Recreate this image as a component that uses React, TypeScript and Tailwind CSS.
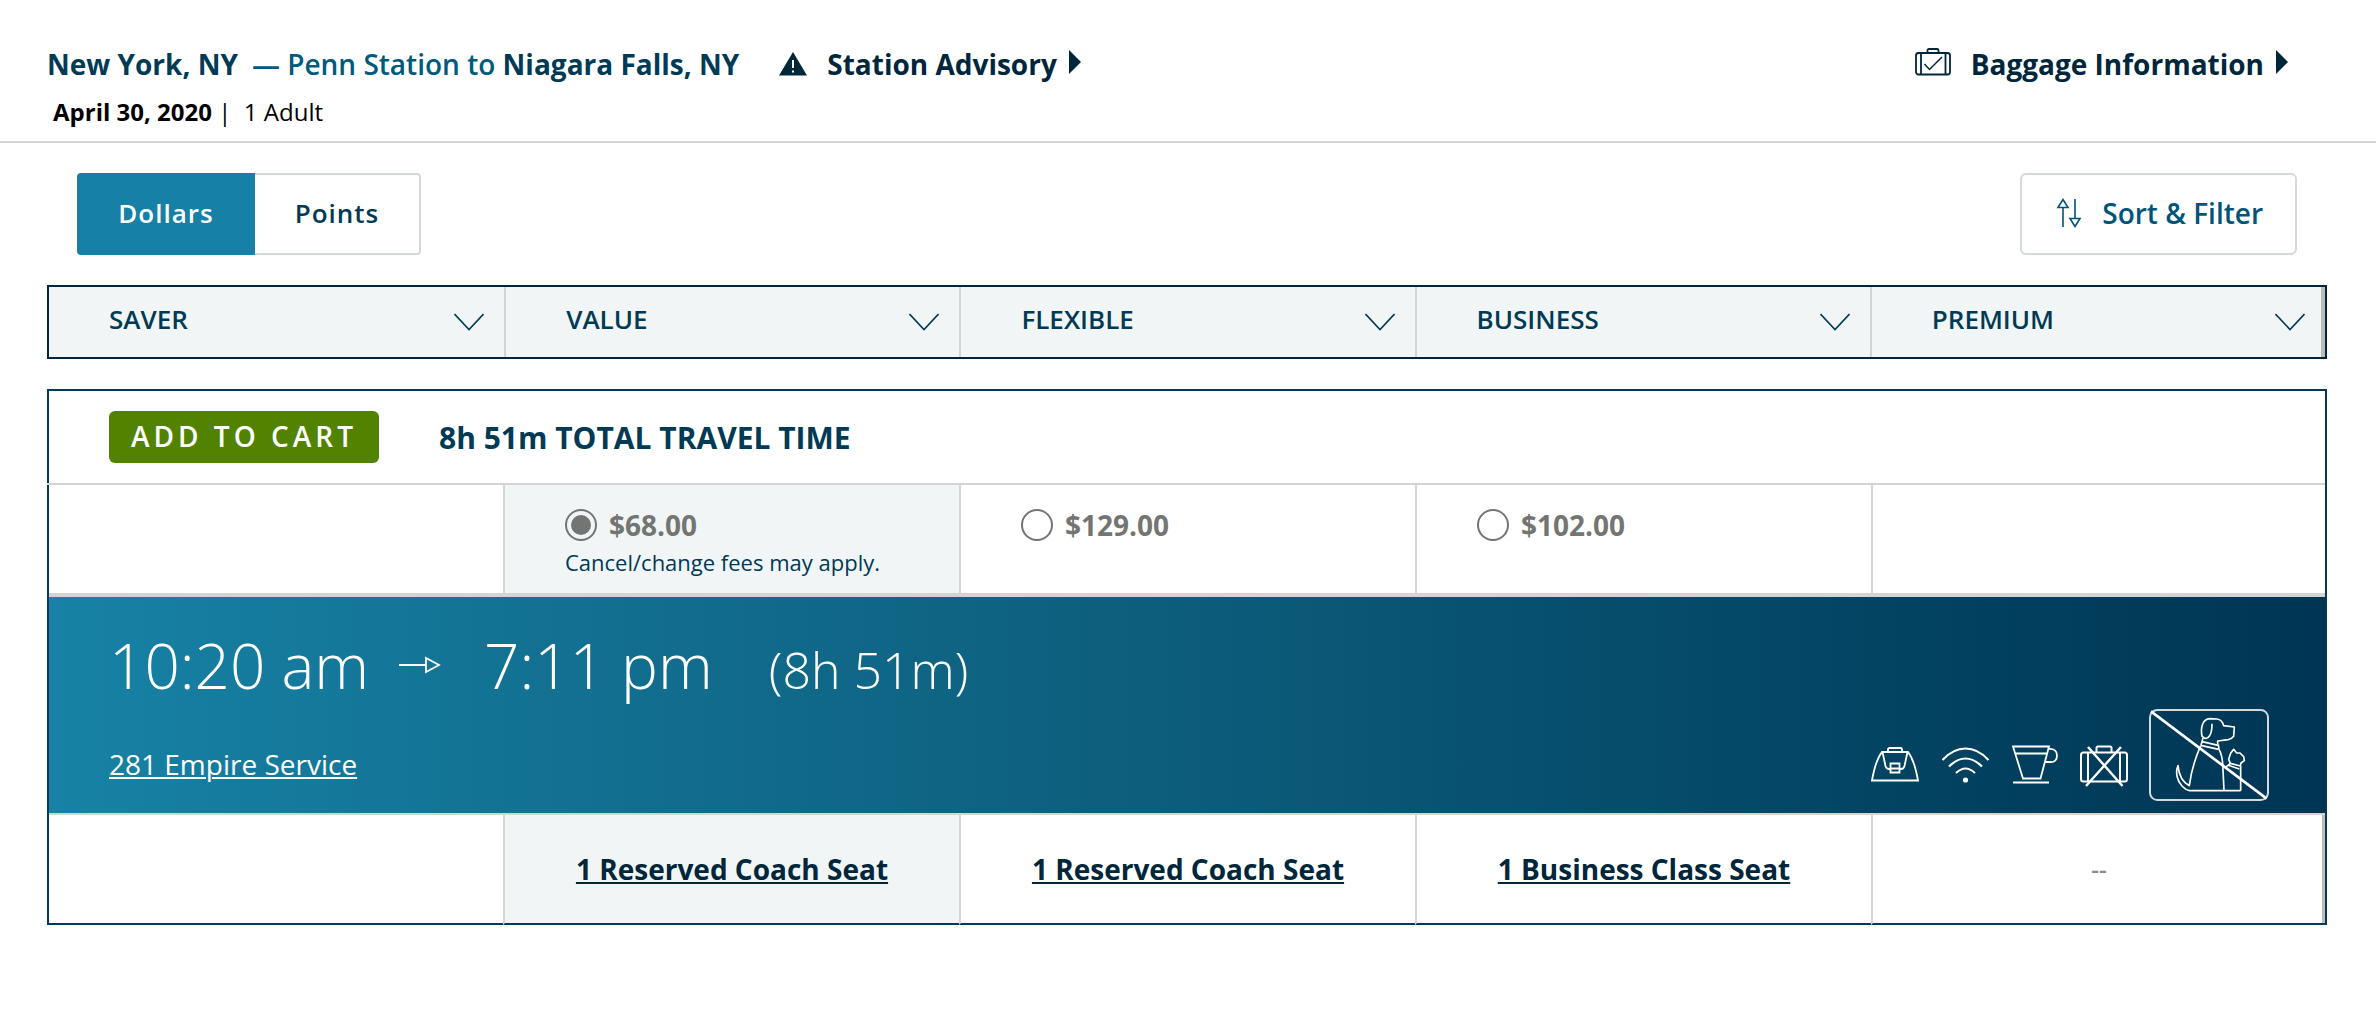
import { useState } from 'react'

const FARES = [
  { id: 'saver', label: 'SAVER', price: null, seat: '' },
  { id: 'value', label: 'VALUE', price: '$68.00', note: 'Cancel/change fees may apply.', seat: '1 Reserved Coach Seat' },
  { id: 'flexible', label: 'FLEXIBLE', price: '$129.00', seat: '1 Reserved Coach Seat' },
  { id: 'business', label: 'BUSINESS', price: '$102.00', seat: '1 Business Class Seat' },
  { id: 'premium', label: 'PREMIUM', price: null, seat: '--' },
]

export default function App() {
  const [currency, setCurrency] = useState('Dollars')
  const [fare, setFare] = useState('value')

  return (
    <div className="min-h-screen bg-white font-['Open_Sans',sans-serif] text-[#003a55]">
      {/* Trip summary */}
      <header className="border-b-2 border-[#d4d4d4] pt-11 pb-[13px] pl-[47px] pr-[88px]">
        <div className="flex items-center justify-between text-[28px] leading-10">
          <div className="flex items-center">
            <h1 className="font-bold">
              New York, NY
              <span className="ml-3.5 font-semibold text-[#005a7c]">— Penn Station to </span>
              Niagara Falls, NY
            </h1>
            <a href="#advisory" className="ml-10 flex items-center font-bold text-[#00263b]">
              <WarningIcon />
              <span className="ml-5">Station Advisory</span>
              <CaretIcon />
            </a>
          </div>
          <a href="#baggage" className="flex items-center font-bold text-[#00263b]">
            <BaggageCheckIcon />
            <span className="ml-5">Baggage Information</span>
            <CaretIcon />
          </a>
        </div>
        <p className="mt-3 ml-1.5 whitespace-pre text-[24px] leading-8 text-black">
          <span className="font-bold">April 30, 2020</span>
          <span> |  1 Adult</span>
        </p>
      </header>

      <main className="pl-[47px] pr-[49px]">
        {/* Currency switch and sort */}
        <div className="mt-[30px] flex justify-between pl-[30px] pr-[30px]">
          <div className="flex h-[82px]">
            {['Dollars', 'Points'].map(c => (
              <button
                key={c}
                onClick={() => setCurrency(c)}
                aria-pressed={currency === c}
                className={`pb-0.5 text-[26px] font-semibold tracking-[1px] first:w-[178px] first:rounded-l last:w-[166px] last:rounded-r ${
                  currency === c
                    ? 'bg-[#1780a7] text-white'
                    : 'border-2 border-[#d4d9d9] bg-white first:border-r-0 last:border-l-0'
                }`}
              >
                {c}
              </button>
            ))}
          </div>
          <button className="flex h-[82px] items-center gap-5 rounded-md border-2 border-[#d4d9d9] pr-8 pl-[34px] pb-0.5 text-[28px] font-semibold text-[#005478]">
            <SortIcon />
            Sort &amp; Filter
          </button>
        </div>

        {/* Fare families */}
        <div className="mt-[30px] grid grid-cols-5 border-2 border-[#00263b] bg-[#f1f5f6]">
          {FARES.map(f => (
            <button
              key={f.id}
              className="flex h-[70px] items-center justify-between border-l-2 border-[#d0d5d6] pr-5 pl-[60px] text-[26px] font-semibold first:border-l-0 last:border-r-4 last:border-r-[#b9bcbc] last:pr-4"
            >
              <span className="pb-1.5">{f.label}</span>
              <ChevronIcon />
            </button>
          ))}
        </div>

        {/* Itinerary */}
        <section className="mt-[30px] border-x-2 border-t-2 border-[#003a55]">
          <div className="flex h-[92px] items-center gap-[60px] pl-[60px]">
            <button className="h-[52px] w-[270px] rounded-md bg-[#528300] pb-0.5 text-[28px] font-semibold tracking-[4px] text-white">
              ADD TO CART
            </button>
            <h2 className="text-[30px] font-bold">8h 51m TOTAL TRAVEL TIME</h2>
          </div>

          <div className="-ml-0.5 border-t-2 border-[#d4d4d4]">
            <div className="-mr-0.5 grid grid-cols-5">
              {FARES.map(f => (
                <div
                  key={f.id}
                  className={`h-[108px] border-l-2 border-l-[#d4d4d4] pt-6 pl-[60px] first:border-l-[#003a55] last:border-r-2 last:border-r-[#003a55] ${
                    fare === f.id ? 'bg-[#f1f5f6]' : ''
                  }`}
                >
                  {f.price && (
                    <label className="flex h-8 items-center gap-3 text-[28px] font-bold text-[#737573]">
                      <input
                        type="radio"
                        name="fare"
                        value={f.id}
                        checked={fare === f.id}
                        onChange={() => setFare(f.id)}
                        className="h-8 w-8 appearance-none rounded-full border-2 border-[#737573] bg-white bg-clip-content p-1 checked:bg-[#737573]"
                      />
                      {f.price}
                    </label>
                  )}
                  {f.note && <p className="mt-1.5 text-[22px] leading-[30px]">{f.note}</p>}
                </div>
              ))}
            </div>
          </div>

          <div className="flex h-[222px] justify-between border-t-4 border-b-2 border-[#d4d4d4] bg-linear-to-r from-[#1782a5] via-[#0d5c7b] to-[#003554] pr-14 pl-[60px] text-white">
            <div className="pt-[26px]">
              <div className="flex h-[84px] items-baseline text-[62px] leading-[84px] font-light">
                <span>10:20 am</span>
                <ArrowIcon />
                <span>7:11 pm</span>
                <span className="ml-14 text-[50px]">(8h 51m)</span>
              </div>
              <a href="#train-281" className="mt-[37px] inline-block text-[28px] leading-10 underline decoration-2 underline-offset-2">
                281 Empire Service
              </a>
            </div>
            <div className="flex items-end gap-[21px] pb-3">
              <HandbagIcon />
              <WifiIcon />
              <CupIcon />
              <NoBaggageIcon />
              <NoPetsIcon />
            </div>
          </div>

          <div className="-mx-0.5 grid grid-cols-5">
            {FARES.map(f => (
              <div
                key={f.id}
                className={`flex h-[110px] items-center justify-center border-b-2 border-l-2 border-b-[#003a55] border-l-[#d4d4d4] first:border-l-[#003a55] last:border-r-2 last:border-r-[#003a55] last:shadow-[inset_-3px_0_0_#bdbdbd] ${
                  fare === f.id ? 'bg-[#f1f5f6]' : ''
                }`}
              >
                {f.price ? (
                  <a href={`#${f.id}`} className="text-[28px] font-bold text-[#00263b] underline decoration-2 underline-offset-2">
                    {f.seat}
                  </a>
                ) : (
                  <span className="text-[24px] font-semibold text-[#8a8a8a]">{f.seat}</span>
                )}
              </div>
            ))}
          </div>
        </section>
      </main>
    </div>
  )
}

function WarningIcon() {
  return (
    <svg className="h-6 w-7" viewBox="0 0 28 24">
      <path d="M14 0L28 23.5H0Z" fill="#00263b" />
      <path d="M14 8v8M14 18.5v2" stroke="#fff" strokeWidth={2} />
    </svg>
  )
}

function CaretIcon() {
  return (
    <svg className="mb-1 ml-3 h-6 w-3" viewBox="0 0 12 24" fill="#00263b">
      <path d="M0 0L12 12L0 24Z" />
    </svg>
  )
}

function BaggageCheckIcon() {
  return (
    <svg className="mb-1 h-7 w-9" viewBox="0 0 36 28" fill="none" stroke="#00263b" strokeWidth={1.8}>
      <rect x="1" y="5" width="34" height="21.5" rx="2.5" />
      <path d="M6 5v21.5M30.5 5v21.5M12.5 5V2.5Q12.5 1 14 1h8q1.5 0 1.5 1.5V5" />
      <path d="M9.5 16l5 5.5L27 9" strokeWidth={1.5} />
    </svg>
  )
}

function SortIcon() {
  return (
    <svg className="h-[30px] w-[26px]" viewBox="0 0 26 30" fill="none" stroke="#005478" strokeWidth={1.6}>
      <path d="M7 9.5V29M2 9.5L7 1.5L12 9.5ZM19 1v19.5M14 20.5h10L19 28.5Z" />
    </svg>
  )
}

function ChevronIcon() {
  return (
    <svg className="h-[18px] w-[30px]" viewBox="0 0 30 18" fill="none" stroke="#003a55" strokeWidth={1.6}>
      <path d="M.5 1L15 16.5L29.5 1" />
    </svg>
  )
}

function ArrowIcon() {
  return (
    <svg className="mr-[43px] ml-[30px] h-[34px] w-[42px]" viewBox="0 0 42 34" fill="none" stroke="#fff" strokeWidth={1.8}>
      <path d="M0 10h27M27 3v14L40 10Z" />
    </svg>
  )
}

function HandbagIcon() {
  return (
    <svg className="mr-0.5 mb-3.5 h-[42px] w-12" viewBox="0 0 48 42" fill="none" stroke="#fff" strokeWidth={1.8}>
      <path d="M1 35.5C3 24 7 12 11 7H37C41 12 45 24 47 35.5Z" />
      <path d="M17 7V4.5Q17 3 18.5 3h11Q31 3 31 4.5V7" />
      <path d="M11.5 7l3 14q.8 3 3.5 3h1.5M36.5 7l-3 14q-.8 3-3.5 3h-1.5" />
      <path d="M19.5 18.5h9v9h-9ZM19.5 23.5h9" />
    </svg>
  )
}

function WifiIcon() {
  return (
    <svg className="mb-3.5 h-[42px] w-12" viewBox="0 0 48 42" fill="none" stroke="#fff" strokeWidth={2.2}>
      <path d="M.5 15Q11 3.500 23.500 3.500T46.500 15M7 21.500Q15 13.500 23.500 13.500T40 21.500M14 28Q19 23.500 23.500 23.500T33 28" />
      <circle cx="23.5" cy="35" r="2.6" fill="#fff" stroke="none" />
    </svg>
  )
}

function CupIcon() {
  return (
    <svg className="mb-3.5 h-[42px] w-12" viewBox="0 0 48 42" fill="none" stroke="#fff" strokeWidth={1.8}>
      <path d="M2 1.5H38L29.5 33.5H12ZM4 8.5H36M2 37.5H38" />
      <path d="M37.5 4Q46 3.5 46 10.5T39 17h-5" />
    </svg>
  )
}

function NoBaggageIcon() {
  return (
    <svg className="mb-3.5 h-[42px] w-12" viewBox="0 0 48 42" fill="none" stroke="#fff" strokeWidth={2}>
      <rect x="1" y="7.5" width="46" height="29" rx="2.5" />
      <path d="M8 7.5v29M40 7.5v29M16.5 7.5V3Q16.5 1.5 18 1.5h12Q31.5 1.5 31.5 3V7.5" />
      <path d="M8 2L42.5 41M41 2L6 41" strokeWidth={2.4} />
    </svg>
  )
}

function NoPetsIcon() {
  return (
    <svg
      className="h-[92px] w-[120px]"
      viewBox="88 57 360 276"
      fill="none"
      stroke="#fff"
      strokeWidth={5}
      strokeLinejoin="round"
    >
      <rect x="91" y="60" width="354" height="270" rx="22" stroke="#d4d9d9" strokeWidth={6} />
      {/* dog */}
      <path d="M247 140C242 112 249 87 270 86L292 87C303 88 309 96 312 107L344 111L342 139Q336 147 326 149L294 153V164" />
      <path d="M247 138C254 148 265 147 270 137C277 126 277 114 277 101" />
      <path d="M250 144L244 166M247 155L296 166M243 166L297 178M296 164L298 178" />
      <path d="M243 167C227 204 214 244 209 287C193 279 178 259 175 227C166 248 173 274 187 288Q200 301 211 302H363" />
      <path d="M298 178C310 198 309 218 310 240L313 302" />
      {/* cat */}
      <path d="M342 178L333 190L327 208L332 220L362 228L364 219L374 212L372 200L361 189H351Z" />
      <path d="M332 220L318 232M326 226L359 237M363 228V302" />
      <path d="M94 64L441 326" strokeWidth={8} />
    </svg>
  )
}
